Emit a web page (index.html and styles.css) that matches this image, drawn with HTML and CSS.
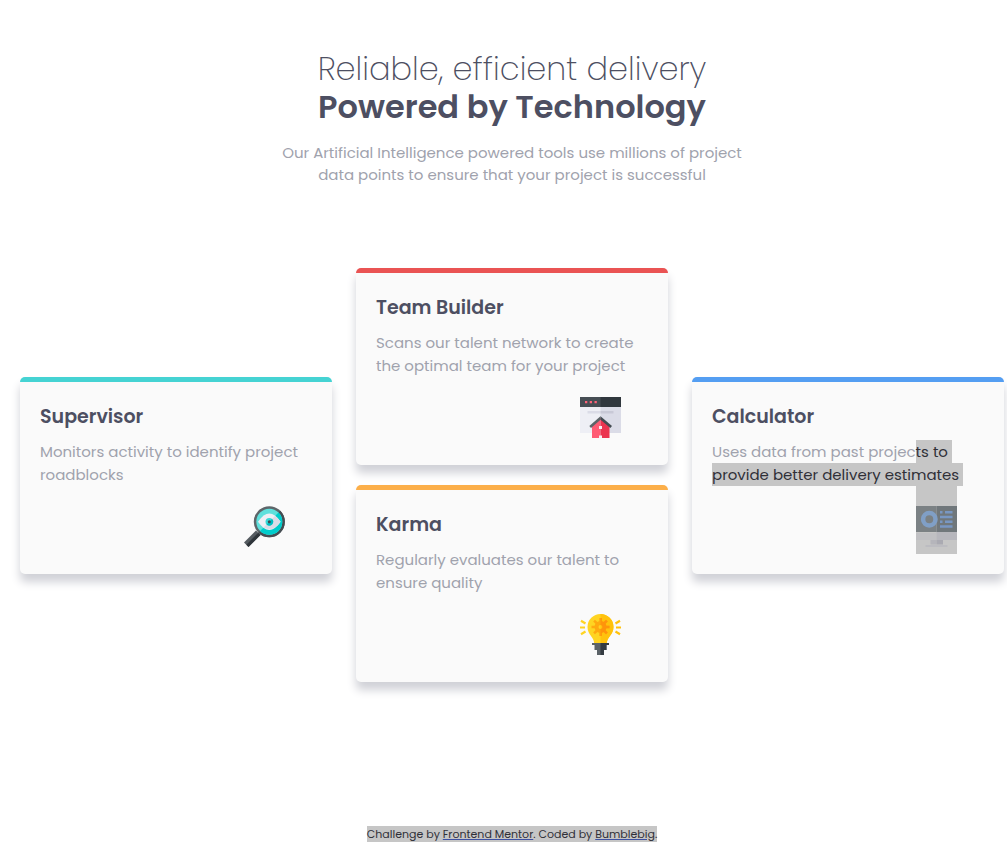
FILE: index.html
```html
<!DOCTYPE html>
<html lang="en">
<head>
  <meta charset="utf-8">
  <meta name="viewport" content="width=device-width, initial-scale=1">
  <title>Four card feature section</title>
  <link rel="stylesheet" href="styles.css">
</head>
<body>
  <header class="intro">
    <h1 class="intro-title"><span class="intro-light">Reliable, efficient delivery</span> <span class="intro-strong">Powered by Technology</span></h1>
    <p class="intro-text">Our Artificial Intelligence powered tools use millions of project data points to ensure that your project is successful</p>
  </header>

  <main class="cards">
    <article class="card card-cyan">
      <h2 class="card-title">Supervisor</h2>
      <p class="card-text">Monitors activity to identify project roadblocks</p>
      <div class="card-icon">
        <svg class="icon" viewBox="0 0 41 41" aria-hidden="true">
          <path d="M0 36.500 12 24.500 16.500 29 4.500 41Z" fill="#555b60"/>
          <path d="M2.300 38.700 14.300 26.700 16.500 29 4.500 41Z" fill="#2f353a"/>
          <circle cx="25.300" cy="15.700" r="15.500" fill="#5d6569"/>
          <path d="M36.300 4.700A15.500 15.500 0 0 1 14.300 26.700Z" fill="#454d52"/>
          <circle cx="25.300" cy="15.700" r="13" fill="#5fe0dc"/>
          <path d="M34.500 6.500A13 13 0 0 1 16.100 24.900Z" fill="#00cccb"/>
          <path d="M14 15.700Q25.300-.8 36.600 15.700 25.300 32.200 14 15.700Z" fill="#eeeff5"/>
          <path d="M31 10Q34.500 12 36.600 15.700 29.500 26.500 19.600 21.400Z" fill="#dbdce7"/>
          <circle cx="25.300" cy="15.700" r="3.800" fill="#39d8d7"/>
          <path d="M28 13A3.800 3.800 0 0 1 22.600 18.400Z" fill="#00bdc2"/>
          <circle cx="25.300" cy="15.700" r="1.500" fill="#404850"/>
        </svg>
      </div>
    </article>

    <div class="card-stack">
      <article class="card card-red">
        <h2 class="card-title">Team Builder</h2>
        <p class="card-text">Scans our talent network to create the optimal team for your project</p>
        <div class="card-icon">
          <svg class="icon" viewBox="0 0 41 41" aria-hidden="true">
            <path d="M0 10H21V36H0Z" fill="#eeeff5"/>
            <path d="M20.500 10H41V36H20.500Z" fill="#dbdce7"/>
            <path d="M0 0H21V10H0Z" fill="#464e54"/>
            <path d="M20.500 0H41V10H20.500Z" fill="#30373d"/>
            <path d="M5 4H7.300V6.300H5ZM9.700 4H12V6.300H9.700ZM14.500 4H16.800V6.300H14.500Z" fill="#ff6378"/>
            <path d="M7.500 14H20.500V16.500H7.500Z" fill="#dbdce7"/>
            <path d="M20.500 14H33.500V16.500H20.500Z" fill="#c8c9d6"/>
            <path d="M12 29 20.500 21V41H12Z" fill="#ff5b74"/>
            <path d="M20.500 21 29.500 29V41H20.500Z" fill="#eb344f"/>
            <path d="M20.500 19.300 9.300 29 11 31 20.500 22.800Z" fill="#5c6468"/>
            <path d="M20.500 19.300 32 29 30.300 31 20.500 22.800Z" fill="#444c52"/>
            <path d="M19 29H22V32H19ZM19 38.500H22V41H19Z" fill="#f7edf2"/>
          </svg>
        </div>
      </article>

      <article class="card card-orange">
        <h2 class="card-title">Karma</h2>
        <p class="card-text">Regularly evaluates our talent to ensure quality</p>
        <div class="card-icon">
          <svg class="icon" viewBox="0 0 41 41" aria-hidden="true">
            <path d="M20.500 0A13 13 0 0 0 7.500 13C7.500 21 14.200 23 14.200 29.500H26.800C26.800 23 33.500 21 33.500 13A13 13 0 0 0 20.500 0Z" fill="#ffd422"/>
            <path d="M20.500 0A13 13 0 0 1 33.500 13C33.500 21 26.800 23 26.800 29.500H20.500Z" fill="#ffc20d"/>
            <circle cx="20.500" cy="13" r="4" fill="none" stroke="#ffa90f" stroke-width="4"/>
            <path d="M20.500 4V8M20.500 18V22M11.500 13H15.500M25.500 13H29.500M14.100 6.600 17 9.500M24 16.500 26.900 19.400M26.900 6.600 24 9.500M17 16.500 14.100 19.400" stroke="#ffa90f" stroke-width="2.500"/>
            <path d="M20.500 7A6 6 0 0 1 20.500 19V15A2 2 0 0 0 20.500 11ZM20.500 4H21.800V8H20.500ZM20.500 18H21.800V22H20.500Z" fill="#ff940b"/>
            <path d="M25.500 13H29.500M24 16.500 26.900 19.400M26.900 6.600 24 9.500" stroke="#ff940b" stroke-width="2.500"/>
            <path d="M5.500 9.500 1 6.800M5 13.500H0M5.500 17.500 1 20.200" stroke="#ffd422" stroke-width="2.200"/>
            <path d="M35.500 9.500 40 6.800M36 13.500H41M35.500 17.500 40 20.200" stroke="#ffc20d" stroke-width="2.200"/>
            <path d="M12 29H29V31H12ZM14.500 31H26.500V36H14.500ZM17 36H24V41H17Z" fill="#5b6267"/>
            <path d="M20.500 29H29V31H26.500V36H24V41H20.500Z" fill="#343b41"/>
          </svg>
        </div>
      </article>
    </div>

    <article class="card card-blue">
      <h2 class="card-title">Calculator</h2>
      <p class="card-text">Uses data from past projec<span class="selected">ts to</span> <span class="selected">provide better delivery estimates</span></p>
      <div class="card-icon card-icon-selected">
        <svg class="icon" viewBox="0 0 41 41" aria-hidden="true">
          <path d="M0 0H20.500V26H0Z" fill="#7b8184"/>
          <path d="M20.500 0H41V26H20.500Z" fill="#70777b"/>
          <path d="M0 27H20.500V34H0Z" fill="#c0c0c3"/>
          <path d="M20.500 26H41V34H20.500Z" fill="#b7b7bd"/>
          <path d="M14.500 34H20.500V38.500H14.500Z" fill="#b5b5bb"/>
          <path d="M20.500 34H27V38.500H20.500Z" fill="#aaaab2"/>
          <path d="M9.500 39H31.500V41H9.500Z" fill="#bcbcc1"/>
          <circle cx="13.300" cy="13.200" r="6.200" fill="none" stroke="#809fc6" stroke-width="4.500"/>
          <path d="M24 5H26.500V7.500H24ZM29 5H36.500V7.500H29ZM24 9.700H36.500V12.200H24ZM24 14.500H26.500V17H24ZM29 14.500H36.500V17H29ZM24 19.200H36.500V21.700H24Z" fill="#7897c3"/>
        </svg>
      </div>
    </article>
  </main>

  <footer class="attribution">
    <p class="attribution-text">Challenge by <a class="attribution-link" href="#mentor">Frontend Mentor</a>. Coded by <a class="attribution-link" href="#author">Bumblebig</a>.</p>
  </footer>
</body>
</html>
```

FILE: styles.css
```css
*,
*::before,
*::after {
  box-sizing: border-box;
}

body {
  display: flex;
  flex-direction: column;
  min-height: 100vh;
  margin: 0;
  padding: 0 3px 0 20px;
  background: #fff;
  color: #4d4f62;
  font-family: Poppins, Inter, "Open Sans", sans-serif;
  font-size: 15px;
  line-height: 22px;
}

h1,
h2,
p {
  margin: 0;
}

.intro {
  display: flex;
  flex-direction: column;
  align-items: center;
  gap: 16px;
  padding-top: 50px;
  text-align: center;
}

.intro-title {
  font-size: 32px;
  font-weight: 600;
  line-height: 38px;
}

.intro-light,
.intro-strong {
  display: block;
}

.intro-light {
  font-weight: 275;
}

.intro-text {
  max-width: 480px;
  color: #a0a2ad;
}

.cards {
  display: grid;
  grid-template-columns: repeat(3, minmax(0, 1fr));
  align-items: center;
  gap: 24px;
  padding-top: 82px;
}

.card-stack {
  display: grid;
  gap: 20px;
}

.card {
  display: flex;
  flex-direction: column;
  padding: 20px;
  border-top: 5px solid;
  border-radius: 5px;
  background: #fafafa;
  box-shadow: 0 8px 10px #d0d1d7;
}

.card-cyan {
  border-color: #45d3d3;
}

.card-red {
  border-color: #ea5353;
}

.card-orange {
  border-color: #fcaf4a;
}

.card-blue {
  border-color: #549ef2;
}

.card-title {
  padding-bottom: 8px;
  font-size: 19px;
  font-weight: 600;
  line-height: 30px;
}

.card-text {
  color: #a0a2ad;
  line-height: 23px;
}

.selected {
  padding: 1px 4px 1px 0;
  background: #c6c6c6;
  color: #303038;
}

.card-icon {
  display: flex;
  align-self: flex-end;
  margin-right: 27px;
  padding: 20px 0 7px;
}

.card-icon-selected {
  background: #c6c6c6;
}

.icon {
  width: 41px;
  height: 41px;
}

.attribution {
  display: flex;
  justify-content: center;
  margin-top: auto;
}

.attribution-text {
  background: #c6c6c6;
  color: #303038;
  font-size: 11px;
  line-height: 16px;
}

.attribution-link {
  color: #303038;
  text-decoration-color: #3e52a3;
}

@media (max-width: 800px) {
  .cards {
    grid-template-columns: minmax(0, 1fr);
  }
}
```
